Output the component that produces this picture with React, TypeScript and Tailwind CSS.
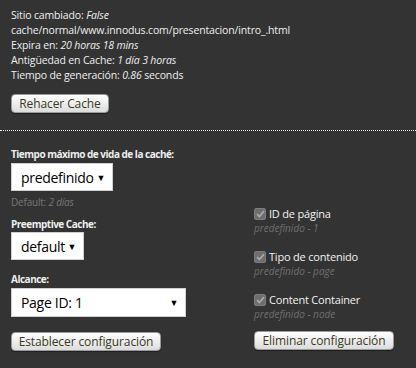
import React from 'react';

const font = { fontFamily: '"Open Sans", "Noto Sans", sans-serif' };

const Button = ({ label, className = '' }: { label: string; className?: string }) => (
	<button
		className={`h-[19px] rounded-[4px] border border-[#9a9a9a] bg-gradient-to-b from-white to-[#dcdcdc] text-[12px] leading-[17px] tracking-[-0.1px] text-[#3a3a22] shadow-[0_1px_1px_rgba(0,0,0,0.4)] ${className}`}
	>
		{label}
	</button>
);

const Select = ({ value, className = '' }: { value: string; className?: string }) => (
	<div className={`flex items-center justify-between bg-white border border-[#cfcfcf] pl-[9px] pr-[7px] text-[14px] tracking-[-0.3px] text-black ${className}`}>
		<span>{value}</span>
		<span className="text-[9px] leading-none">▼</span>
	</div>
);

const CheckItem = ({ label, hint }: { label: string; hint: string }) => (
	<div className="flex flex-col">
		<div className="flex items-center gap-[3px] h-[14px]">
			<div className="flex items-center justify-center w-[12px] h-[12px] rounded-[2px] bg-[#6e6e6e] border border-[#7c7c7c]">
				<svg width="9" height="8" viewBox="0 0 9 8">
					<path d="M1 4.2 L3.4 6.5 L8 1.2" stroke="#a9a9a9" strokeWidth="1.8" fill="none" />
				</svg>
			</div>
			<span className="text-[11px] tracking-[-0.2px] text-[#f2f2f2]">{label}</span>
		</div>
		<span className="mt-[1px] text-[10px] italic leading-[13px] text-[#6f6f6f]">{hint}</span>
	</div>
);

const App = () => {
	return (
		<div className="w-[416px] h-[368px] bg-[#333333] text-[#eeeeee]" style={font}>
			<section className="px-[11px] pt-2 pb-4">
				<div className="text-[10.5px] leading-[15px] tracking-[-0.15px]">
					<div>
						Sitio cambiado: <i>False</i>
					</div>
					<div>cache/normal/www.innodus.com/presentacion/intro_.html</div>
					<div>
						Expira en: <i>20 horas 18 mins</i>
					</div>
					<div>
						Antigüedad en Cache: <i>1 día 3 horas</i>
					</div>
					<div>
						Tiempo de generación: <i>0.86</i> seconds
					</div>
				</div>
				<Button label="Rehacer Cache" className="mt-[11px] w-[98px]" />
			</section>
			<div className="border-t border-dotted border-white" />
			<section className="flex px-[11px] pt-4">
				<div className="flex flex-col w-[243px]">
					<span className="text-[10px] font-bold leading-[14px] tracking-[-0.5px]">Tiempo máximo de vida de la caché:</span>
					<Select value="predefinido" className="mt-[2px] w-[102px] h-[28px]" />
					<span className="mt-[5px] text-[10px] leading-[12px] tracking-[-0.2px] text-[#777777]">
						Default: <i>2 días</i>
					</span>
					<span className="mt-[9px] text-[10px] font-bold leading-[14px] tracking-[-0.5px]">Preemptive Cache:</span>
					<Select value="default" className="mt-[1px] w-[73px] h-[28px]" />
					<span className="mt-[12px] text-[10px] font-bold leading-[14px] tracking-[-0.5px]">Alcance:</span>
					<Select value="Page ID: 1" className="mt-[2px] w-[175px] h-[29px]" />
					<Button label="Establecer configuración" className="mt-[15px] w-[150px]" />
				</div>
				<div className="flex flex-col pt-[60px]">
					<div className="flex flex-col gap-[15px]">
						<CheckItem label="ID de página" hint="predefinido - 1" />
						<CheckItem label="Tipo de contenido" hint="predefinido - page" />
						<CheckItem label="Content Container" hint="predefinido - node" />
					</div>
					<Button label="Eliminar configuración" className="mt-[10px] w-[140px]" />
				</div>
			</section>
		</div>
	);
};

export default App;
